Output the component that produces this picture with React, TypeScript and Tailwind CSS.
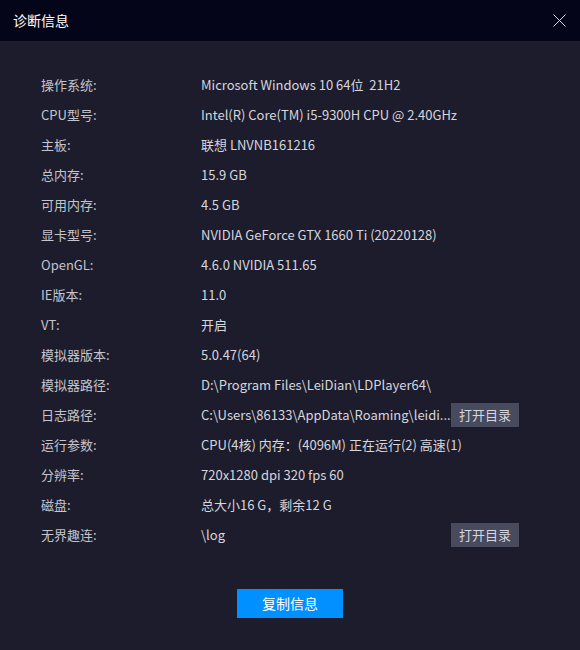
const rows: { label: string; value: string; action?: boolean }[] = [
  { label: "操作系统:", value: "Microsoft Windows 10 64位  21H2" },
  { label: "CPU型号:", value: "Intel(R) Core(TM) i5-9300H CPU @ 2.40GHz" },
  { label: "主板:", value: "联想 LNVNB161216" },
  { label: "总内存:", value: "15.9 GB" },
  { label: "可用内存:", value: "4.5 GB" },
  { label: "显卡型号:", value: "NVIDIA GeForce GTX 1660 Ti (20220128)" },
  { label: "OpenGL:", value: "4.6.0 NVIDIA 511.65" },
  { label: "IE版本:", value: "11.0" },
  { label: "VT:", value: "开启" },
  { label: "模拟器版本:", value: "5.0.47(64)" },
  { label: "模拟器路径:", value: "D:\\Program Files\\LeiDian\\LDPlayer64\\" },
  { label: "日志路径:", value: "C:\\Users\\86133\\AppData\\Roaming\\leidi...", action: true },
  { label: "运行参数:", value: "CPU(4核) 内存：(4096M) 正在运行(2) 高速(1)" },
  { label: "分辨率:", value: "720x1280 dpi 320 fps 60" },
  { label: "磁盘:", value: "总大小16 G，剩余12 G" },
  { label: "无界趣连:", value: "\\log", action: true },
]

export default function App() {
  return (
    <div
      className="w-[580px] h-[650px] bg-[#1d1c2c] flex flex-col text-[13px]"
      style={{ fontFamily: '"Noto Sans CJK SC", "Noto Sans", sans-serif' }}
    >
      <div className="h-[41px] shrink-0 bg-[#05051a] flex items-center justify-between pl-[13px] pr-[14px]">
        <span className="text-[14px] text-white">诊断信息</span>
        <svg width="13" height="13" viewBox="0 0 13 13" className="text-[#d8d8e4]">
          <path d="M0.5 0.5 L12.5 12.5 M12.5 0.5 L0.5 12.5" stroke="currentColor" strokeWidth="1" />
        </svg>
      </div>

      <div className="flex flex-col pt-[29px] pl-[41px] pr-[61px]">
        {rows.map((r) => (
          <div key={r.label} className="h-[30px] flex items-center">
            <span className="w-[160px] shrink-0 text-[#c4c4cc]">{r.label}</span>
            <span className="flex-1 text-[#d6d6de] whitespace-pre">{r.value}</span>
            {r.action && (
              <button className="w-[68px] h-[24px] bg-[#484a5e] text-[#d6d6de] text-[13px]">
                打开目录
              </button>
            )}
          </div>
        ))}
      </div>

      <div className="flex justify-center pt-[39px]">
        <button className="w-[106px] h-[29px] bg-[#0090ff] text-white text-[14px]">
          复制信息
        </button>
      </div>
    </div>
  )
}
